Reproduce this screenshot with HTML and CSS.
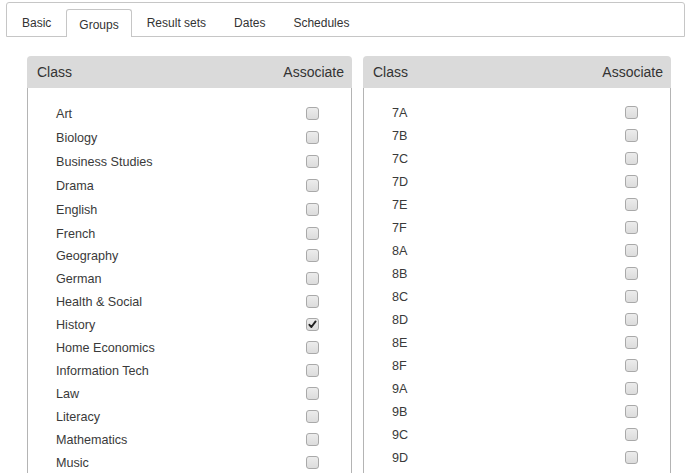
FILE: index.html
```html
<!DOCTYPE html>
<html>
<head>
<meta charset="utf-8">
<link rel="stylesheet" href="styles.css">
</head>
<body>
<div class="tabs">
  <div class="tab">Basic</div>
  <div class="tab active">Groups</div>
  <div class="tab">Result sets</div>
  <div class="tab">Dates</div>
  <div class="tab">Schedules</div>
</div>
<div class="content">
  <div class="panel panel-left">
    <div class="panel-head"><span>Class</span><span>Associate</span></div>
    <div class="panel-body">
      <div class="row wide"><span>Art</span><span class="cb"></span></div>
      <div class="row wide"><span>Biology</span><span class="cb"></span></div>
      <div class="row wide"><span>Business Studies</span><span class="cb"></span></div>
      <div class="row wide"><span>Drama</span><span class="cb"></span></div>
      <div class="row wide"><span>English</span><span class="cb"></span></div>
      <div class="row narrow"><span>French</span><span class="cb"></span></div>
      <div class="row"><span>Geography</span><span class="cb"></span></div>
      <div class="row"><span>German</span><span class="cb"></span></div>
      <div class="row"><span>Health &amp; Social</span><span class="cb"></span></div>
      <div class="row"><span>History</span><span class="cb checked"><svg viewBox="0 0 13 13" width="13" height="13"><path d="M3.4 6.8 L5.4 9 L9.6 3.4" fill="none" stroke="#222" stroke-width="1.9" stroke-linecap="round" stroke-linejoin="round"/></svg></span></div>
      <div class="row"><span>Home Economics</span><span class="cb"></span></div>
      <div class="row"><span>Information Tech</span><span class="cb"></span></div>
      <div class="row"><span>Law</span><span class="cb"></span></div>
      <div class="row"><span>Literacy</span><span class="cb"></span></div>
      <div class="row"><span>Mathematics</span><span class="cb"></span></div>
      <div class="row"><span>Music</span><span class="cb"></span></div>
    </div>
  </div>
  <div class="panel panel-right">
    <div class="panel-head"><span>Class</span><span>Associate</span></div>
    <div class="panel-body">
      <div class="row"><span>7A</span><span class="cb"></span></div>
      <div class="row"><span>7B</span><span class="cb"></span></div>
      <div class="row"><span>7C</span><span class="cb"></span></div>
      <div class="row"><span>7D</span><span class="cb"></span></div>
      <div class="row"><span>7E</span><span class="cb"></span></div>
      <div class="row"><span>7F</span><span class="cb"></span></div>
      <div class="row"><span>8A</span><span class="cb"></span></div>
      <div class="row"><span>8B</span><span class="cb"></span></div>
      <div class="row"><span>8C</span><span class="cb"></span></div>
      <div class="row"><span>8D</span><span class="cb"></span></div>
      <div class="row"><span>8E</span><span class="cb"></span></div>
      <div class="row"><span>8F</span><span class="cb"></span></div>
      <div class="row"><span>9A</span><span class="cb"></span></div>
      <div class="row"><span>9B</span><span class="cb"></span></div>
      <div class="row"><span>9C</span><span class="cb"></span></div>
      <div class="row"><span>9D</span><span class="cb"></span></div>
    </div>
  </div>
</div>
</body>
</html>
```
FILE: styles.css
```css
html, body {
  margin: 0;
  padding: 0;
  background: #fff;
  font-family: "Liberation Sans", Arial, sans-serif;
  color: #333;
  overflow: hidden;
  height: 473px;
}

.tabs {
  margin: 2px 6px 0 6px;
  height: 35px;
  box-sizing: border-box;
  border: 1px solid #c6c6c6;
  border-radius: 3px 3px 0 0;
  display: flex;
  align-items: flex-end;
  padding-left: 2px;
  gap: 2px;
}

.tab {
  box-sizing: border-box;
  height: 28px;
  margin-bottom: -1px;
  padding: 6px 12px 0 12px;
  font-size: 12px;
  line-height: 15px;
  color: #333;
  border: 1px solid transparent;
  border-bottom: none;
  border-radius: 3px 3px 0 0;
}

.tab.active {
  padding-top: 8px;
  background: #fff;
  border-color: #c6c6c6;
}

.content {
  display: flex;
  gap: 11px;
  padding: 19px 0 0 27px;
}

.panel-left { width: 325px; }
.panel-right { width: 308px; }

.panel-head {
  height: 32px;
  background: #dadada;
  border-radius: 4px 4px 0 0;
  display: flex;
  align-items: center;
  justify-content: space-between;
  padding: 0 8px 0 10px;
  font-size: 14px;
  color: #333;
}

.panel-body {
  box-sizing: border-box;
  border-left: 1px solid #b4b4b4;
  border-right: 1px solid #b4b4b4;
  padding: 14px 32px 0 28px;
  height: 385px;
  overflow: hidden;
}

.panel-right .panel-body {
  padding-top: 13px;
}

.row {
  height: 23px;
  display: flex;
  align-items: center;
  justify-content: space-between;
  font-size: 12.6px;
  color: #3a3a3a;
}

.row.wide { margin-bottom: 1px; }
.row.narrow { margin-bottom: -1px; }

.cb {
  box-sizing: border-box;
  width: 13px;
  height: 13px;
  border: 1px solid #a9a9a9;
  border-radius: 3px;
  background: linear-gradient(#ececec, #dcdcdc);
  display: block;
  position: relative;
}

.cb svg {
  position: absolute;
  left: -1px;
  top: -1px;
}
```
